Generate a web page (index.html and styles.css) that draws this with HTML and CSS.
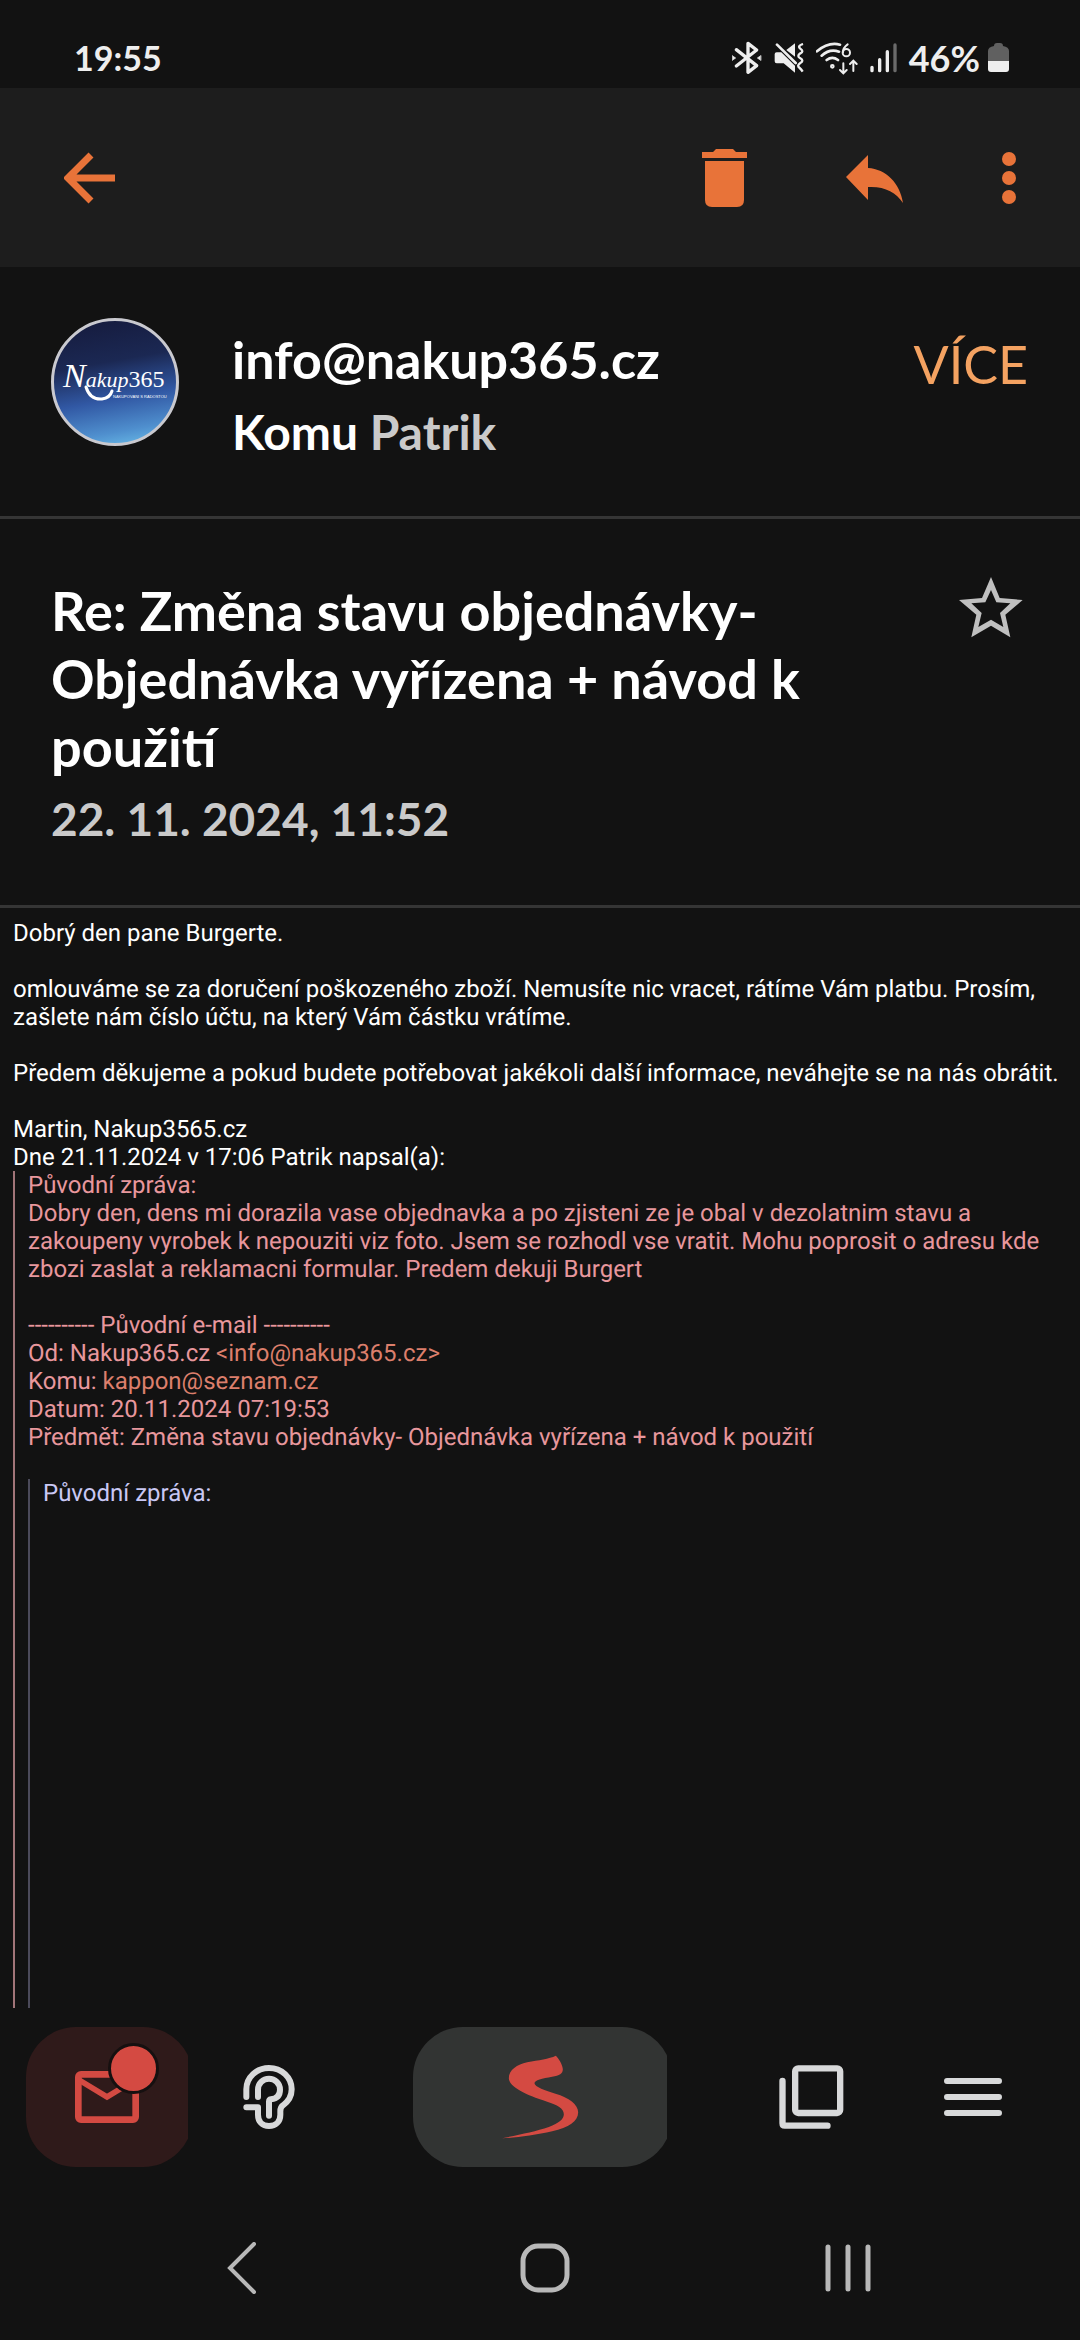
FILE: index.html
```html
<!DOCTYPE html>
<html lang="cs">
<head>
    <meta charset="UTF-8">
    <meta name="viewport" content="width=device-width, initial-scale=1.0">
    <title>Re: Změna stavu objednávky</title>
    <link rel="stylesheet" href="styles.css">
</head>
<body>
    <div class="status">
        <span>19:55</span>
        <div class="status-icons">
            <svg width="30" height="34" viewBox="96 66 90 100" fill="none" stroke="#eee" stroke-width="10" stroke-linejoin="round" stroke-linecap="round">
                <path d="M109 91L170 139L144 159V72L170 92L109 140"/>
                <path d="M97 109L107 116L97 123Z M182 109L172 116L182 123Z" fill="#eee" stroke-width="2"/>
            </svg>
            <svg width="30" height="30" viewBox="221 71 90 90" fill="#eee">
                <path d="M223 104Q223 99 229 99H243L284 139V160L250 132H229Q223 132 223 126Z M258 92L284 72V112Z"/>
                <path d="M230 76L286 131" stroke="#eee" stroke-width="8" stroke-linecap="round"/>
                <path d="M308 74Q290 80 300 88Q312 96 300 102Q288 110 300 117Q312 124 300 131Q288 139 298 146Q303 150 307 157" fill="none" stroke="#eee" stroke-width="7"/>
            </svg>
            <svg width="42" height="33" viewBox="349 67 126 99" fill="none" stroke="#eee" stroke-width="8" stroke-linecap="round">
                <path d="M352 95Q386 66 421 75M366 108Q390 86 418 96M381 121Q398 108 415 121"/>
                <circle cx="398" cy="140" r="3"/>
                <path d="M444 74Q430 84 430 98" stroke-width="6"/>
                <circle cx="440" cy="99" r="11" stroke-width="6"/>
                <path d="M431 131V160M421 151L431 161L441 151M461 154V124M451 133L461 123L471 133" stroke-width="6"/>
            </svg>
            <svg width="27" height="30" viewBox="504 71 81 90" stroke="#eee" stroke-width="10" stroke-linecap="round">
                <path d="M510 144V154M533 121V154M556 97V154"/>
                <path d="M579 77V154" stroke="#6a6a6a"/>
            </svg>
            <span class="battery">46%
                <svg width="21" height="30" viewBox="0 0 21 30">
                    <path d="M6 3Q6 0 9 0H12Q15 0 15 3Q21 4 21 8V18H0V8Q0 4 6 3Z" fill="#606060"/>
                    <path d="M0 18H21V26Q21 29 18 29H3Q0 29 0 26Z" fill="#eee"/>
                </svg>
            </span>
        </div>
    </div>

    <header class="toolbar">
        <button class="icon" aria-label="Zpět">
            <svg width="52" height="52" viewBox="0 0 52 52"><path d="M27 3L4 26L27 49M4 26H51" fill="none" stroke="#e87339" stroke-width="7"/></svg>
        </button>
        <div class="actions">
            <button class="icon" aria-label="Smazat">
                <svg width="46" height="60" viewBox="0 0 46 60" fill="#e87339"><path d="M0 4H11L14 1H31L34 4H45V10H0Z M3 13H42V52Q42 59 35 59H10Q3 59 3 52Z"/></svg>
            </button>
            <button class="icon" aria-label="Odpovědět">
                <svg width="58" height="52" viewBox="0 -3 58 52" fill="#e87339"><path d="M0 22L22 0V13C40 14 54 28 57 48C50 37 38 31 22 32V45Z"/></svg>
            </button>
            <button class="icon" aria-label="Další možnosti">
                <svg width="14" height="52" viewBox="0 0 14 52" fill="#e87339"><circle cx="7" cy="7" r="7"/><circle cx="7" cy="26" r="7"/><circle cx="7" cy="45" r="7"/></svg>
            </button>
        </div>
    </header>

    <section class="sender">
        <div class="avatar">
            <svg viewBox="0 0 122 122" fill="#fff">
                <path d="M32 66Q36 79 48 78Q56 77 58 70" fill="none" stroke="#fff" stroke-width="3" stroke-linecap="round"/>
                <text class="logo" x="9" y="66"><tspan class="logo-n">N</tspan>akup<tspan class="logo-num">365</tspan></text>
                <text class="logo-tag" x="59" y="77">NAKUPOVÁNÍ S RADOSTOU</text>
            </svg>
        </div>
        <div class="people">
            <div class="from">info@nakup365.cz</div>
            <div class="to">Komu <span class="muted">Patrik</span></div>
        </div>
        <button class="more">VÍCE</button>
    </section>

    <section class="subject">
        <div class="subject-text">
            <h1>Re: Změna stavu objednávky- Objednávka vyřízena + návod k použití</h1>
            <time class="muted">22. 11. 2024, 11:52</time>
        </div>
        <button class="icon star" aria-label="Označit hvězdičkou">
            <svg width="64" height="61" viewBox="236 833 192 183" fill="#c0c0c0" fill-rule="evenodd"><path d="M332 833L358 896L427 902L375 946L390 1014L332 979L273 1014L288 946L236 902L305 896Z M332 872L315 909L273 912L304 941L294 983L332 961L369 983L359 941L390 912L348 909Z"/></svg>
        </button>
    </section>

    <main class="message">
        <p>Dobrý den pane Burgerte.</p>
        <p>omlouváme se za doručení poškozeného zboží. Nemusíte nic vracet, rátíme Vám platbu. Prosím, zašlete nám číslo účtu, na který Vám částku vrátíme.</p>
        <p>Předem děkujeme a pokud budete potřebovat jakékoli další informace, neváhejte se na nás obrátit.</p>
        <div>Martin, Nakup3565.cz</div>
        <div>Dne 21.11.2024 v 17:06 Patrik napsal(a):</div>
        <blockquote class="quote">
            <div>Původní zpráva:</div>
            <p>Dobry den, dens mi dorazila vase objednavka a po zjisteni ze je obal v dezolatnim stavu a zakoupeny vyrobek k nepouziti viz foto. Jsem se rozhodl vse vratit. Mohu poprosit o adresu kde zbozi zaslat a reklamacni formular. Predem dekuji Burgert</p>
            <div>---------- Původní e-mail ----------</div>
            <div>Od: Nakup365.cz <a href="mailto:info@nakup365.cz">&lt;info@nakup365.cz&gt;</a></div>
            <div>Komu: <a href="mailto:kappon@seznam.cz">kappon@seznam.cz</a></div>
            <div>Datum: 20.11.2024 07:19:53</div>
            <p>Předmět: Změna stavu objednávky- Objednávka vyřízena + návod k použití</p>
            <blockquote class="quote inner">
                <div>Původní zpráva:</div>
            </blockquote>
        </blockquote>
    </main>

    <nav class="tabs">
        <div class="tab-group">
            <button class="tab active" aria-label="E-mail">
                <svg width="64" height="52" viewBox="231 303 192 156" fill="none" stroke="#d44a42"><rect x="241" y="313" width="172" height="136" rx="8" stroke-width="20"/><path d="M245 331L327 381L409 331" stroke-width="17"/></svg>
                <span class="badge"></span>
            </button>
            <button class="tab" aria-label="Poslech">
                <svg width="52" height="64" viewBox="734 285 156 192" fill="none" stroke="#d8d9da" stroke-width="18" stroke-linecap="round" stroke-linejoin="round">
                    <path d="M744 381V358C744 322 775 294 812 294C850 294 880 322 880 358C880 380 868 396 854 406C848 410 846 414 846 424V434C846 455 832 468 812 468C792 468 779 455 779 434V412H744"/>
                    <path d="M779 381V359A33 33 0 1 1 845 359C845 378 832 386 818 388Q812 389 812 395V437"/>
                </svg>
            </button>
        </div>
        <button class="tab home" aria-label="Seznam">
            <svg width="77" height="84" viewBox="370 255 230 252" fill="#d44a42"><path d="M531 257C540 266 552 285 552 298C552 312 542 317 520 320C490 325 467 330 467 340C467 350 500 363 530 371C570 383 598 403 598 427C598 455 570 472 520 484C470 496 410 503 370 505C420 494 470 485 510 471C540 460 555 448 555 433C555 415 535 404 505 395C440 375 390 350 390 325C390 300 415 283 445 277C480 270 510 267 531 257Z"/></svg>
        </button>
        <div class="tab-group">
            <button class="tab" aria-label="Panely">
                <svg width="65" height="64" viewBox="121 285 194 192" fill="none" stroke="#d8d9da" stroke-width="19" stroke-linecap="round"><rect x="169" y="295" width="135" height="134" rx="9"/><path d="M131 333V460Q131 467 138 467H266"/></svg>
            </button>
            <button class="tab" aria-label="Menu">
                <svg width="58" height="38" viewBox="0 0 58 38" stroke="#d8d9da" stroke-width="6" stroke-linecap="round"><path d="M3 3H55M3 19H55M3 35H55"/></svg>
            </button>
        </div>
    </nav>

    <nav class="system">
        <button class="icon" aria-label="Zpět">
            <svg width="30" height="52" viewBox="0 0 30 52" fill="none" stroke="#b8b8b8" stroke-width="4" stroke-linecap="round"><path d="M27 2L3 26L27 50"/></svg>
        </button>
        <button class="icon" aria-label="Domů">
            <svg width="50" height="50" viewBox="0 0 50 50" fill="none" stroke="#b8b8b8" stroke-width="5"><rect x="3" y="3" width="44" height="44" rx="15"/></svg>
        </button>
        <button class="icon" aria-label="Poslední aplikace">
            <svg width="46" height="48" viewBox="0 0 46 48" stroke="#b8b8b8" stroke-width="5" stroke-linecap="round"><path d="M3 3V45M23 3V45M43 3V45"/></svg>
        </button>
    </nav>
</body>
</html>
```
FILE: styles.css
```css
* {
    box-sizing: border-box;
}

body {
    margin: 0;
    min-height: 100vh;
    display: flex;
    flex-direction: column;
    background: #121212;
    color: #fff;
    font-family: Lato, "Open Sans", sans-serif;
    font-weight: 700;
}

button {
    padding: 0;
    border: 0;
    background: none;
    font: inherit;
    cursor: pointer;
}

svg {
    display: block;
}

.muted {
    color: #cacaca;
}

.icon {
    display: flex;
    align-items: center;
    justify-content: center;
}

/* stavový řádek */
.status {
    display: flex;
    align-items: center;
    justify-content: space-between;
    height: 88px;
    padding: 28px 71px 0 74px;
    color: #eee;
    font-size: 34px;
    line-height: 60px;
}

.status-icons {
    display: flex;
    align-items: center;
    gap: 12px;
}

.battery {
    display: flex;
    align-items: center;
    gap: 8px;
    font-size: 36px;
}

/* horní lišta */
.toolbar {
    display: flex;
    align-items: center;
    justify-content: space-between;
    height: 179px;
    padding: 0 64px;
    background: #1d1d1d;
}

.actions {
    display: flex;
    align-items: center;
    gap: 98px;
}

/* odesílatel */
.sender {
    display: flex;
    align-items: flex-start;
    padding: 51px 52px 48px 51px;
    border-bottom: 3px solid #353535;
}

.avatar {
    width: 128px;
    height: 128px;
    overflow: hidden;
    border: 3px solid #c9c9cf;
    border-radius: 50%;
    background: linear-gradient(170deg, #151a3c 0%, #1b2853 35%, #3158a4 62%, #4f8fce 85%, #6cc0ea 100%);
}

.logo {
    font: italic 22px "Liberation Serif", serif;
}

.logo-n {
    font-size: 34px;
}

.logo-num {
    font-size: 24px;
    font-style: normal;
}

.logo-tag {
    font: 4px "Liberation Sans", sans-serif;
}

.people {
    flex: 1;
    padding: 4px 0 0 53px;
    font-size: 48px;
}

.from {
    font-size: 52px;
    line-height: 74px;
}

.to {
    line-height: 72px;
}

.more {
    padding-top: 10px;
    color: #f4a261;
    font-size: 52px;
    font-weight: 400;
    line-height: 72px;
}

/* předmět */
.subject {
    display: flex;
    align-items: flex-start;
    gap: 100px;
    padding: 58px 57px 48px 51px;
    border-bottom: 3px solid #353535;
}

.subject-text {
    flex: 1;
}

.subject h1 {
    margin: 0;
    font-size: 54px;
    line-height: 68px;
}

.subject time {
    display: block;
    font-size: 46px;
    line-height: 76px;
}

/* text zprávy */
.message {
    flex: 1;
    display: flex;
    flex-direction: column;
    padding: 11px 13px 0;
    font-family: Roboto, sans-serif;
    font-size: 24px;
    font-weight: 400;
    line-height: 28px;
    text-rendering: geometricPrecision;
}

.message p {
    margin: 0 0 28px;
}

.quote {
    flex: 1;
    display: flex;
    flex-direction: column;
    margin: 0;
    padding-left: 13px;
    border-left: 2px solid #a17478;
    color: #e8979d;
}

.quote a {
    color: #dc7f6c;
    text-decoration: none;
}

.inner {
    border-color: #4b4a5a;
    color: #c9c8f4;
}

/* spodní lišta */
.tabs {
    display: flex;
    justify-content: space-between;
    padding: 19px 26px 28px;
}

.tab-group {
    display: flex;
}

.tab {
    position: relative;
    display: flex;
    align-items: center;
    justify-content: center;
    width: 162px;
    height: 140px;
    overflow: hidden;
}

.tab svg {
    position: relative;
}

.active::before,
.home::before {
    content: "";
    position: absolute;
    inset: 0 -5px 0 0;
    border-radius: 50px;
    background: #2f1a1a;
}

.home {
    width: 254px;
}

.home::before {
    background: #323433;
}

.badge {
    position: absolute;
    top: 16px;
    left: 82px;
    width: 51px;
    height: 51px;
    border: 3px solid #161010;
    border-radius: 50%;
    background: #d44a42;
}

.system {
    display: grid;
    grid-template-columns: repeat(3, 1fr);
    height: 145px;
    padding: 0 80px 0 90px;
}
```
